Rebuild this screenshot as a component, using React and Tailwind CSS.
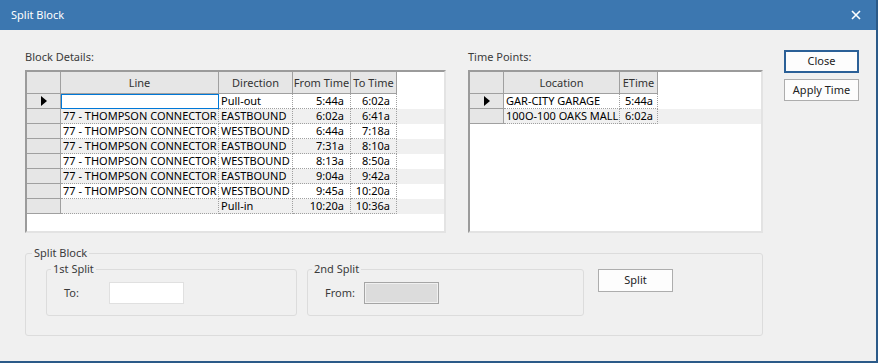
import React from 'react';

const blockCols = [
  { key: 'line', label: 'Line', w: 'w-[158px]', align: 'text-left pl-[2px]' },
  { key: 'dir', label: 'Direction', w: 'w-[74px]', align: 'text-left pl-[2px]' },
  { key: 'from', label: 'From Time', w: 'w-[58px]', align: 'text-right pr-[6px]' },
  { key: 'to', label: 'To Time', w: 'w-[46px]', align: 'text-right pr-[6px]' },
];

const blockRows = [
  { line: '', dir: 'Pull-out', from: '5:44a', to: '6:02a' },
  { line: '77 - THOMPSON CONNECTOR', dir: 'EASTBOUND', from: '6:02a', to: '6:41a' },
  { line: '77 - THOMPSON CONNECTOR', dir: 'WESTBOUND', from: '6:44a', to: '7:18a' },
  { line: '77 - THOMPSON CONNECTOR', dir: 'EASTBOUND', from: '7:31a', to: '8:10a' },
  { line: '77 - THOMPSON CONNECTOR', dir: 'WESTBOUND', from: '8:13a', to: '8:50a' },
  { line: '77 - THOMPSON CONNECTOR', dir: 'EASTBOUND', from: '9:04a', to: '9:42a' },
  { line: '77 - THOMPSON CONNECTOR', dir: 'WESTBOUND', from: '9:45a', to: '10:20a' },
  { line: '', dir: 'Pull-in', from: '10:20a', to: '10:36a' },
];

const pointCols = [
  { key: 'loc', label: 'Location', w: 'w-[116px]', align: 'text-left pl-[2px]' },
  { key: 'etime', label: 'ETime', w: 'w-[38px]', align: 'text-right pr-[4px]' },
];

const pointRows = [
  { loc: 'GAR-CITY GARAGE', etime: '5:44a' },
  { loc: '100O-100 OAKS MALL', etime: '6:02a' },
];

// row pointer arrow
const Arrow = () => (
  <svg width="6" height="10" viewBox="0 0 6 10">
    <polygon points="0,0 6,5 0,10" fill="#000" />
  </svg>
);

const Grid = ({ columns, rows, editFirst }) => (
  <div className="h-[163px] bg-white border-2 border-t-[#9b9b9b] border-l-[#9b9b9b] border-r-[#e3e3e3] border-b-[#e3e3e3] overflow-hidden">
    {/* header */}
    <div className="flex h-[22px]">
      <div className="w-[34px] shrink-0 bg-[#e6e6e6] border-r border-b border-[#a0a0a0]" />
      {columns.map((c) => (
        <div
          key={c.key}
          className={`${c.w} shrink-0 bg-[#e6e6e6] border-r border-b border-[#a0a0a0] text-center leading-[21px] text-[#333]`}
        >
          {c.label}
        </div>
      ))}
    </div>
    {rows.map((r, i) => (
      <div key={i} className={`flex h-[15px] ${i % 2 === 1 ? 'bg-[#f0f0f0]' : 'bg-white'}`}>
        <div className="w-[34px] shrink-0 bg-[#e6e6e6] border-r border-b border-[#a0a0a0] flex items-center justify-center">
          {i === 0 && <Arrow />}
        </div>
        {columns.map((c, j) =>
          editFirst && i === 0 && j === 0 ? (
            <div key={c.key} className={`${c.w} shrink-0 bg-white border border-[#0078d7]`} />
          ) : (
            <div
              key={c.key}
              className={`${c.w} shrink-0 border-r border-b border-dotted border-[#a0a0a0] leading-[14px] whitespace-nowrap overflow-hidden ${c.align}`}
            >
              {r[c.key]}
            </div>
          )
        )}
      </div>
    ))}
  </div>
);

const Button = ({ children, primary, className = '' }) => (
  <button
    className={`w-[75px] bg-[#fdfdfd] text-[#222] ${
      primary ? 'h-[23px] border-2 border-[#2b6097]' : 'h-[22px] border border-[#adadad]'
    } ${className}`}
  >
    {children}
  </button>
);

export default function App() {
  return (
    <div className="w-[878px] h-[363px] flex flex-col bg-[#f0f0f0] border-r-2 border-b-2 border-[#2b5a88] font-['Noto_Sans','Open_Sans',sans-serif] text-[11px] text-black overflow-hidden">
      {/* Title bar */}
      <div className="h-[30px] shrink-0 bg-[#3c77b0] flex items-center justify-between pl-[11px] pr-[15px] text-white text-[11px]">
        <span>Split Block</span>
        <svg width="10" height="10" viewBox="0 0 10 10">
          <path d="M1 1 L9 9 M9 1 L1 9" stroke="#fff" strokeWidth="1.6" />
        </svg>
      </div>

      <div className="flex-1 pl-[25px] pt-[19px]">
        <div className="flex">
          <div className="w-[421px]">
            <div className="h-[16px] leading-[16px] mb-[5px] text-[#3b3b3b]">Block Details:</div>
            <Grid columns={blockCols} rows={blockRows} editFirst />
          </div>
          <div className="w-[295px] ml-[22px]">
            <div className="h-[16px] leading-[16px] mb-[5px] text-[#3b3b3b]">Time Points:</div>
            <Grid columns={pointCols} rows={pointRows} />
          </div>
          <div className="ml-[21px] pt-[1px] flex flex-col">
            <Button primary>Close</Button>
            <Button className="mt-[6px]">Apply Time</Button>
          </div>
        </div>

        {/* Split Block group */}
        <fieldset className="mt-[12px] w-[738px] border border-[#dcdcdc] rounded-[3px]">
          <legend className="ml-[6px] px-[2px] leading-[16px] text-[#3b3b3b]">Split Block</legend>
          <div className="flex items-start pl-[20px] pb-[19px]">
            <fieldset className="w-[251px] border border-[#dcdcdc] rounded-[3px]">
              <legend className="ml-[4px] px-[2px] leading-[16px] text-[#3b3b3b]">1st Split</legend>
              <div className="flex items-center pl-[17px] pt-[5px] pb-[11px]">
                <span className="w-[45px] text-[#3b3b3b]">To:</span>
                <div className="w-[75px] h-[22px] bg-white border border-[#e0e0e0]" />
              </div>
            </fieldset>
            <fieldset className="ml-[10px] w-[277px] border border-[#dcdcdc] rounded-[3px]">
              <legend className="ml-[4px] px-[2px] leading-[16px] text-[#3b3b3b]">2nd Split</legend>
              <div className="flex items-center pl-[17px] pt-[5px] pb-[11px]">
                <span className="w-[39px] text-[#3b3b3b]">From:</span>
                <div className="w-[75px] h-[22px] bg-[#dcdcdc] border border-[#a5a5a5] shadow-[inset_0_0_0_1px_#f0f0f0]" />
              </div>
            </fieldset>
            <Button className="ml-[14px] mt-[8px] !h-[23px]">Split</Button>
          </div>
        </fieldset>
      </div>
    </div>
  );
}
